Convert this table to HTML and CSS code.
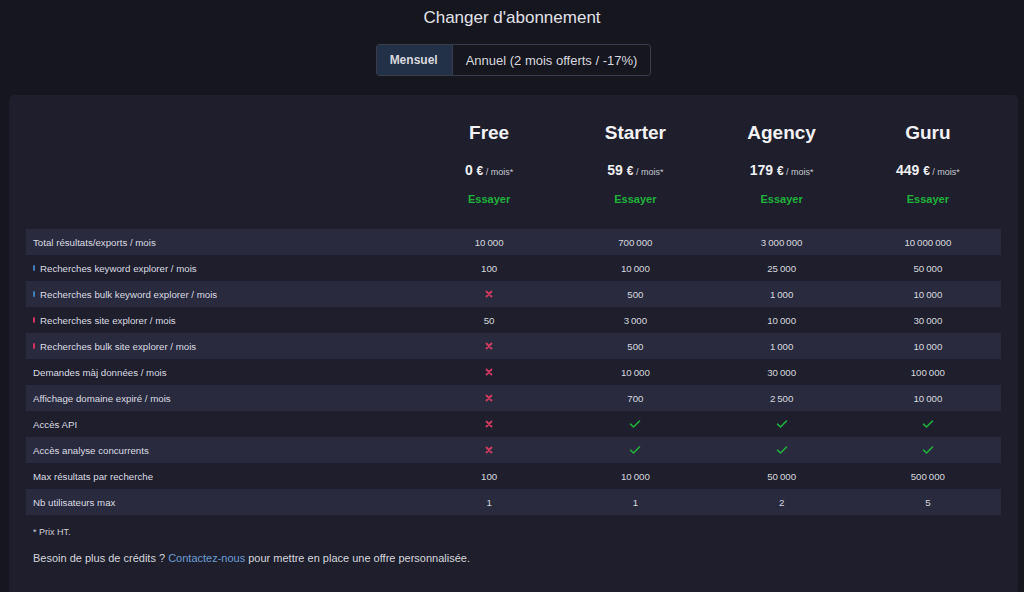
FILE: index.html
```html
<!DOCTYPE html>
<html lang="fr">
<head>
<meta charset="utf-8">
<title>Changer d'abonnement</title>
<link rel="stylesheet" href="styles.css">
</head>
<body>
<h1 class="title">Changer d'abonnement</h1>
<div class="toggle-wrap">
  <div class="toggle">
    <button class="tbtn active">Mensuel</button>
    <button class="tbtn">Annuel (2 mois offerts / -17%)</button>
  </div>
</div>
<section class="card">
  <div class="plans">
    <div class="plan-spacer"></div>
    <div class="plan"><div class="pname">Free</div><div class="price"><b>0</b> <b class="eur">€</b><span class="per"> / mois*</span></div><a class="try">Essayer</a></div>
    <div class="plan"><div class="pname">Starter</div><div class="price"><b>59</b> <b class="eur">€</b><span class="per"> / mois*</span></div><a class="try">Essayer</a></div>
    <div class="plan"><div class="pname">Agency</div><div class="price"><b>179</b> <b class="eur">€</b><span class="per"> / mois*</span></div><a class="try">Essayer</a></div>
    <div class="plan"><div class="pname">Guru</div><div class="price"><b>449</b> <b class="eur">€</b><span class="per"> / mois*</span></div><a class="try">Essayer</a></div>
  </div>
  <div class="table">
    <div class="row"><div class="lbl">Total résultats/exports / mois</div><div class="val">10&#8201;000</div><div class="val">700&#8201;000</div><div class="val">3&#8201;000&#8201;000</div><div class="val">10&#8201;000&#8201;000</div></div>
    <div class="row"><div class="lbl"><i class="mark blue"></i>Recherches keyword explorer / mois</div><div class="val">100</div><div class="val">10&#8201;000</div><div class="val">25&#8201;000</div><div class="val">50&#8201;000</div></div>
    <div class="row"><div class="lbl"><i class="mark blue"></i>Recherches bulk keyword explorer / mois</div><div class="val"><svg class="no" viewBox="0 0 10 10"><path d="M2.5 2.5l5 5M7.5 2.5l-5 5"/></svg></div><div class="val">500</div><div class="val">1&#8201;000</div><div class="val">10&#8201;000</div></div>
    <div class="row"><div class="lbl"><i class="mark red"></i>Recherches site explorer / mois</div><div class="val">50</div><div class="val">3&#8201;000</div><div class="val">10&#8201;000</div><div class="val">30&#8201;000</div></div>
    <div class="row"><div class="lbl"><i class="mark red"></i>Recherches bulk site explorer / mois</div><div class="val"><svg class="no" viewBox="0 0 10 10"><path d="M2.5 2.5l5 5M7.5 2.5l-5 5"/></svg></div><div class="val">500</div><div class="val">1&#8201;000</div><div class="val">10&#8201;000</div></div>
    <div class="row"><div class="lbl">Demandes màj données / mois</div><div class="val"><svg class="no" viewBox="0 0 10 10"><path d="M2.5 2.5l5 5M7.5 2.5l-5 5"/></svg></div><div class="val">10&#8201;000</div><div class="val">30&#8201;000</div><div class="val">100&#8201;000</div></div>
    <div class="row"><div class="lbl">Affichage domaine expiré / mois</div><div class="val"><svg class="no" viewBox="0 0 10 10"><path d="M2.5 2.5l5 5M7.5 2.5l-5 5"/></svg></div><div class="val">700</div><div class="val">2&#8201;500</div><div class="val">10&#8201;000</div></div>
    <div class="row"><div class="lbl">Accès API</div><div class="val"><svg class="no" viewBox="0 0 10 10"><path d="M2.5 2.5l5 5M7.5 2.5l-5 5"/></svg></div><div class="val"><svg class="yes" viewBox="0 0 12 10"><path d="M1.5 5.2l3 2.8 6-6"/></svg></div><div class="val"><svg class="yes" viewBox="0 0 12 10"><path d="M1.5 5.2l3 2.8 6-6"/></svg></div><div class="val"><svg class="yes" viewBox="0 0 12 10"><path d="M1.5 5.2l3 2.8 6-6"/></svg></div></div>
    <div class="row"><div class="lbl">Accès analyse concurrents</div><div class="val"><svg class="no" viewBox="0 0 10 10"><path d="M2.5 2.5l5 5M7.5 2.5l-5 5"/></svg></div><div class="val"><svg class="yes" viewBox="0 0 12 10"><path d="M1.5 5.2l3 2.8 6-6"/></svg></div><div class="val"><svg class="yes" viewBox="0 0 12 10"><path d="M1.5 5.2l3 2.8 6-6"/></svg></div><div class="val"><svg class="yes" viewBox="0 0 12 10"><path d="M1.5 5.2l3 2.8 6-6"/></svg></div></div>
    <div class="row"><div class="lbl">Max résultats par recherche</div><div class="val">100</div><div class="val">10&#8201;000</div><div class="val">50&#8201;000</div><div class="val">500&#8201;000</div></div>
    <div class="row"><div class="lbl">Nb utilisateurs max</div><div class="val">1</div><div class="val">1</div><div class="val">2</div><div class="val">5</div></div>
  </div>
  <p class="note">* Prix HT.</p>
  <p class="more">Besoin de plus de crédits ? <a class="link">Contactez-nous</a> pour mettre en place une offre personnalisée.</p>
</section>
</body>
</html>
```
FILE: styles.css
```css
* { box-sizing: border-box; }
html, body { margin: 0; padding: 0; }
body {
  background: #16161f;
  color: #dcdce2;
  font-family: "Liberation Sans", Arial, sans-serif;
  height: 592px;
  overflow: hidden;
}
.title {
  margin: 0;
  padding-top: 8px;
  text-align: center;
  font-size: 17px;
  font-weight: normal;
  line-height: 20px;
  color: #e2e2e8;
}
.toggle-wrap {
  display: flex;
  justify-content: center;
  margin-top: 16px;
}
.toggle {
  display: flex;
  border: 1px solid #3a3b4c;
  border-radius: 3px;
  overflow: hidden;
  height: 32px;
  margin-left: 3px;
}
.tbtn {
  background: transparent;
  border: 0;
  color: #d8d8de;
  font-family: inherit;
  font-size: 13px;
  padding: 0 13px;
}
.tbtn.active {
  background: #233148;
  font-size: 12px;
  font-weight: bold;
  border-right: 1px solid #3a3b4c;
  padding: 0 14px 0 13px;
}
.card {
  margin: 19px 6px 0 9px;
  background: #1e1e2d;
  border-radius: 5px;
  padding: 26px 17px 30px 17px;
  height: 500px;
}
.plans {
  display: grid;
  grid-template-columns: 390px repeat(4, 1fr);
}
.plan {
  display: flex;
  flex-direction: column;
  align-items: center;
}
.pname {
  font-size: 19px;
  font-weight: bold;
  line-height: 24px;
  color: #f2f2f4;
}
.price {
  margin-top: 17px;
  font-size: 14px;
  line-height: 16px;
  color: #f0f0f2;
}
.price .eur { font-size: 12px; }
.per { font-size: 9px; color: #c8c8d0; }
.try {
  margin-top: 13px;
  font-size: 11px;
  font-weight: bold;
  color: #1fb33a;
  line-height: 13px;
}
.table { margin-top: 23px; }
.row {
  display: grid;
  grid-template-columns: 390px repeat(4, 1fr);
  height: 26px;
  align-items: center;
  font-size: 9.7px;
}
.row:nth-child(odd) { background: #292a3e; }
.lbl {
  padding-left: 7px;
  display: flex;
  align-items: center;
  color: #dcdce2;
}
.val {
  text-align: center;
  display: flex;
  justify-content: center;
  align-items: center;
  color: #d8d8de;
}
.mark {
  display: inline-block;
  width: 2px;
  height: 6px;
  margin-right: 5px;
  border-radius: 1px;
}
.mark.blue { background: #3f7fb8; }
.mark.red { background: #d2315c; }
.no { width: 10px; height: 10px; fill: none; stroke: #d23a60; stroke-width: 1.8; stroke-linecap: round; }
.yes { width: 12px; height: 10px; fill: none; stroke: #21b23b; stroke-width: 1.6; stroke-linecap: round; stroke-linejoin: round; }
.note {
  margin: 12px 0 0 7px;
  font-size: 9px;
  color: #d0d0d6;
}
.more {
  margin: 15px 0 0 7px;
  font-size: 11px;
  color: #d6d6dc;
}
.link { color: #6c9fd4; }
```
